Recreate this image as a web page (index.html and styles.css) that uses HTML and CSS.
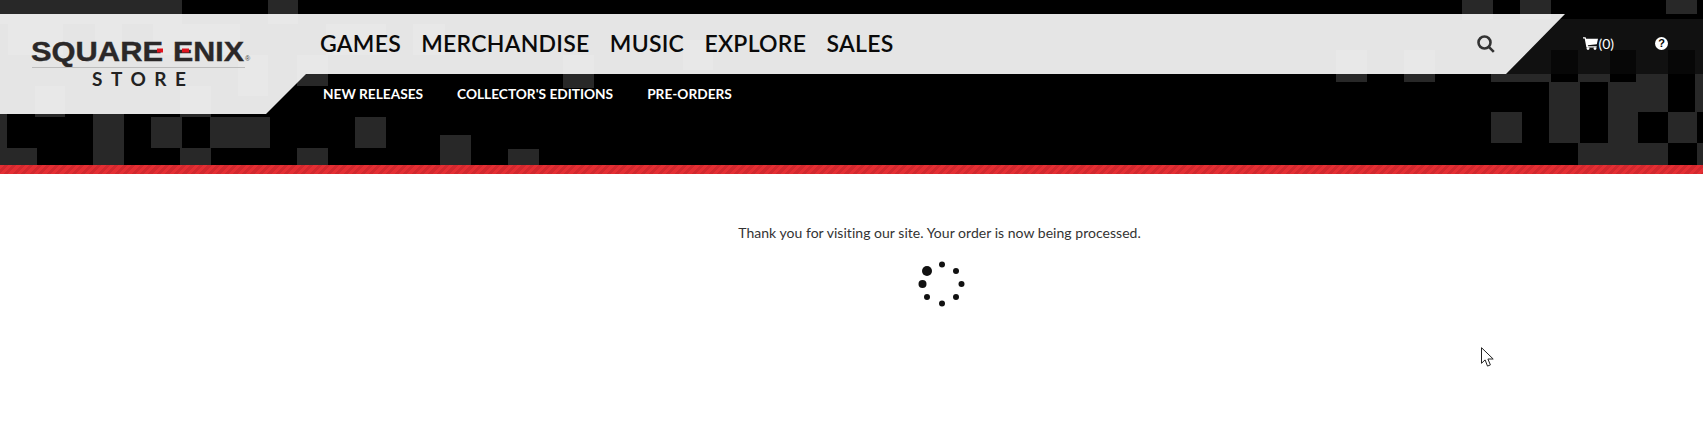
FILE: index.html
```html
<!DOCTYPE html>
<html lang="en">
<head>
<meta charset="utf-8">
<title>Square Enix Store</title>
<link rel="stylesheet" href="styles.css">
</head>
<body>
<header class="site-header">
  <svg class="pixels" width="1703" height="165" viewBox="0 0 1703 165" aria-hidden="true">
    <g class="pixel-set">
      <rect x="0" y="0" width="182" height="24"/><rect x="268" y="0" width="30" height="24"/>
      <rect x="1462" y="0" width="31" height="20"/><rect x="1520" y="0" width="31" height="20"/><rect x="1666" y="0" width="31" height="14"/>
      <rect x="8" y="24" width="55" height="31"/><rect x="95" y="24" width="27" height="31"/><rect x="153" y="24" width="87" height="31"/><rect x="326" y="24" width="60" height="31"/><rect x="413" y="24" width="32" height="31"/>
      <rect x="35" y="86" width="30" height="31"/><rect x="180" y="86" width="31" height="31"/><rect x="238" y="55" width="30" height="41"/>
      <rect x="297" y="55" width="31" height="31"/><rect x="563" y="55" width="31" height="33"/><rect x="683" y="40" width="30" height="30"/>
      <rect x="1336" y="50" width="31" height="32"/><rect x="1404" y="50" width="31" height="32"/><rect x="1491" y="50" width="60" height="32"/><rect x="1578" y="50" width="32" height="32"/><rect x="1636" y="50" width="32" height="32"/><rect x="1695" y="50" width="8" height="62"/>
      <rect x="0" y="114" width="7" height="34"/><rect x="0" y="148" width="37" height="17"/><rect x="93" y="114" width="31" height="51"/><rect x="151" y="117" width="31" height="31"/><rect x="180" y="148" width="31" height="17"/><rect x="210" y="117" width="60" height="31"/><rect x="297" y="148" width="31" height="17"/><rect x="355" y="117" width="31" height="31"/><rect x="440" y="135" width="31" height="30"/><rect x="508" y="149" width="31" height="16"/>
      <rect x="1491" y="112" width="31" height="31"/><rect x="1549" y="82" width="31" height="61"/><rect x="1608" y="82" width="60" height="30"/><rect x="1608" y="112" width="30" height="31"/><rect x="1668" y="112" width="29" height="31"/><rect x="1578" y="143" width="90" height="22"/><rect x="1697" y="143" width="6" height="22"/>
    </g>
    <rect class="veil" x="1490" y="19" width="213" height="55"/>
    <rect class="veil-gap" x="1551" y="50" width="27" height="24"/><rect class="veil-gap" x="1610" y="50" width="26" height="24"/><rect class="veil-gap" x="1668" y="50" width="27" height="24"/>
  </svg>
  <div class="bar-shape"></div>
  <div class="header-inner">
    <a class="brand" href="#" aria-label="Square Enix Store">
      <svg class="brand-logo" width="230" height="60" viewBox="0 0 230 60">
        <text class="logo-main" x="0" y="29" textLength="132" lengthAdjust="spacingAndGlyphs">SQUARE</text>
        <text class="logo-main" x="142" y="29" textLength="71" lengthAdjust="spacingAndGlyphs">ENIX</text>
        <text class="logo-reg" x="214" y="29">®</text>
        <rect class="logo-red" x="126" y="16.5" width="6" height="4"/>
        <rect class="logo-red" x="151" y="16.5" width="7" height="4"/>
        <rect class="logo-rule" x="1" y="35" width="213" height="1"/>
        <text class="logo-store" x="61" y="54" textLength="94">STORE</text>
      </svg>
    </a>
    <div class="nav-col">
      <div class="main-row">
        <nav class="main-nav">
          <a href="#">GAMES</a><a href="#">MERCHANDISE</a><a href="#">MUSIC</a><a href="#">EXPLORE</a><a href="#">SALES</a>
        </nav>
        <div class="tools">
          <svg class="icon-search" width="20" height="20" viewBox="0 0 20 20" aria-label="Search"><circle cx="8.5" cy="8.5" r="6"/><path d="M12.8 12.8l5 5"/></svg>
          <a class="cart" href="#">
            <svg class="icon-cart" width="15" height="13" viewBox="0 0 15 13"><path d="M0 .2h2.6l.5 1.5H15l-1.2 5.6-9 .9.3 1.1h8.6v1.2H3.4L1.7 1.4H0z"/><circle cx="5" cy="11.6" r="1.4"/><circle cx="12" cy="11.6" r="1.4"/></svg>
            <span>(0)</span>
          </a>
          <a class="help" href="#" aria-label="Help">?</a>
        </div>
      </div>
      <nav class="sub-nav">
        <a href="#">NEW RELEASES</a><a href="#">COLLECTOR'S EDITIONS</a><a href="#">PRE-ORDERS</a>
      </nav>
    </div>
  </div>
</header>
<div class="red-band"></div>
<main class="content">
  <p class="message">Thank you for visiting our site. Your order is now being processed.</p>
  <svg class="spinner" width="50" height="46" viewBox="-4 0 50 46" aria-hidden="true">
    <circle cx="23" cy="3.5" r="3"/><circle cx="37" cy="10" r="3"/><circle cx="42.5" cy="23" r="3"/><circle cx="37" cy="36" r="3"/><circle cx="23" cy="42.5" r="3"/><circle cx="8" cy="36" r="3"/><circle cx="3.5" cy="23" r="4"/><circle cx="8" cy="10" r="5"/>
  </svg>
</main>
<svg class="cursor" width="14" height="21" viewBox="0 0 14 21" aria-hidden="true"><path d="M.5.7v15.6l3.6-3.4 2.4 6.2 2.9-1.2-2.5-5.9h5.3z"/></svg>
</body>
</html>
```
FILE: styles.css
```css
* { box-sizing: border-box; }
html, body { margin: 0; padding: 0; background: #fff; }
body { font-family: "Lato", "Open Sans", sans-serif; color: #333; height: 423px; overflow: hidden; position: relative; }
a { color: inherit; text-decoration: none; }

.site-header { position: relative; height: 165px; padding-top: 14px; background: #000; }
.pixels { position: absolute; left: 0; top: 0; }
.pixel-set rect { fill: #282828; }
.veil { fill: #111; }
.veil-gap { fill: #070707; }
.bar-shape {
  position: absolute; left: 0; top: 14px; width: 1565px; height: 100px;
  background: rgba(248, 248, 248, .92);
  clip-path: polygon(0 0, 100% 0, 1506px 60px, 306px 60px, 266px 100px, 0 100px);
}
.header-inner { position: relative; display: flex; }
.brand { width: 320px; flex: none; padding: 18px 0 0 31px; }
.brand-logo { display: block; }
.logo-main { font: 700 28px "Liberation Sans", sans-serif; fill: #2b2828; stroke: #2b2828; stroke-width: .4; }
.logo-reg { font: 400 7px "Liberation Sans", sans-serif; fill: #444; }
.logo-red { fill: #e0141e; }
.logo-rule { fill: #bdbdbd; }
.logo-store { font: 700 19px "Lato", sans-serif; fill: #222; }

.nav-col { flex: 1; min-width: 0; }
.main-row { display: flex; align-items: center; height: 60px; padding-bottom: 2px; }
.main-nav { display: flex; gap: 20.3px; font-size: 23px; font-weight: 600; color: #0a0a0a; letter-spacing: .25px; }
.tools { display: flex; align-items: center; margin-left: auto; padding-right: 35px; color: #fff; }
.icon-search { fill: none; stroke: #333; stroke-width: 2.6; margin: 1px 87px 0 0; }
.cart { display: flex; align-items: center; font-size: 14px; margin-right: 41px; }
.icon-cart { fill: #fff; }
.help {
  width: 13px; height: 13px; border-radius: 50%; background: #fff; color: #000;
  font: 700 11px/13px "Liberation Sans", sans-serif; text-align: center;
}
.sub-nav { display: flex; gap: 34px; padding: 8px 0 0 3px; font-size: 13.7px; font-weight: 700; line-height: 24px; color: #fff; }

.red-band { height: 9px; background: repeating-linear-gradient(135deg, #e42e33 0 3px, #d2282e 3px 6px); }
.content { padding: 49px 0 0 176px; text-align: center; }
.message { margin: 0; font-size: 14px; line-height: 20px; color: #333; letter-spacing: .03px; }
.spinner { display: block; margin: 18px auto 0; fill: #111; }
.cursor { position: absolute; left: 1481px; top: 347px; fill: #fff; stroke: #222; stroke-width: 1; }
```
